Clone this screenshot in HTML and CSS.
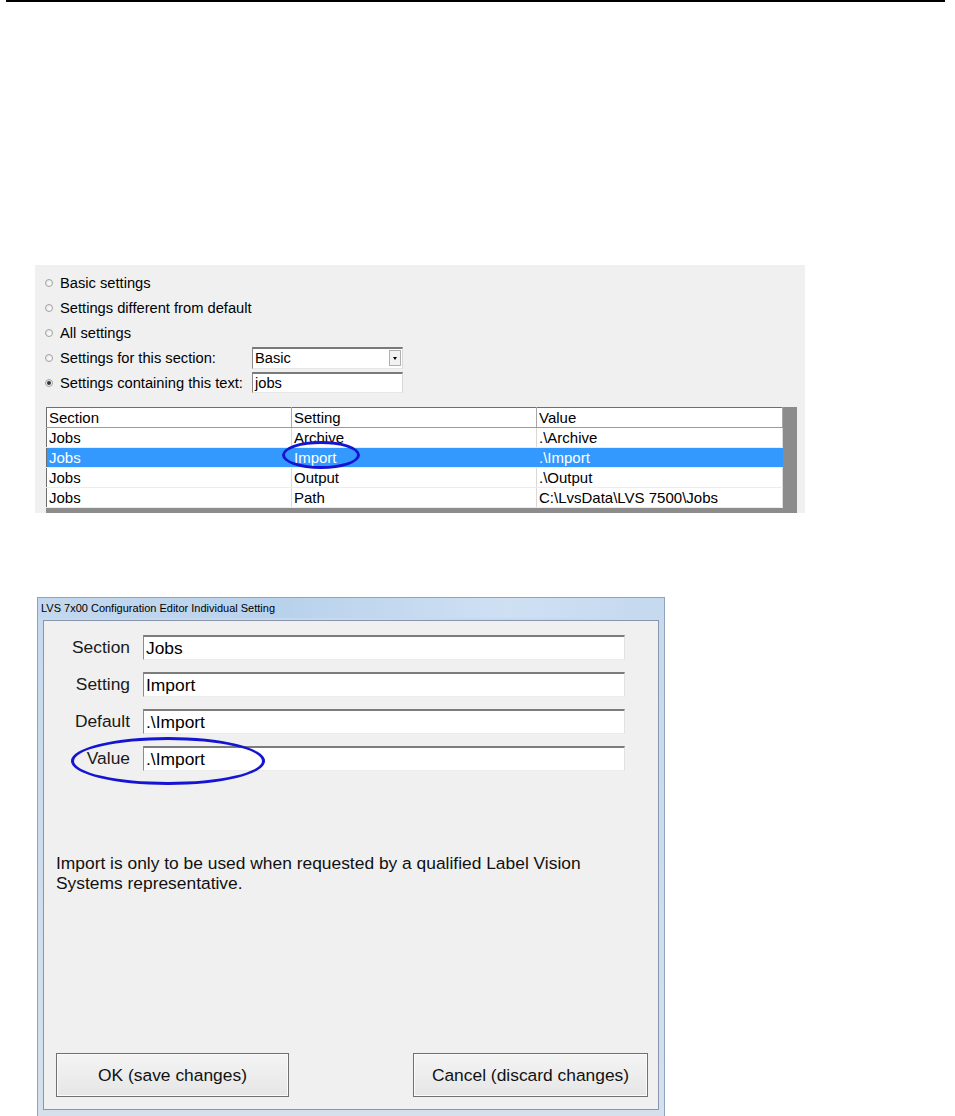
FILE: index.html
```html
<!DOCTYPE html>
<html lang="en">
<head>
    <meta charset="UTF-8">
    <title>LVS 7x00 Configuration Editor</title>
    <link rel="stylesheet" href="styles.css">
</head>
<body>
    <div class="rule"></div>

    <div class="panel">
        <div class="options">
            <div class="option"><span class="radio"></span><span class="option-label">Basic settings</span></div>
            <div class="option"><span class="radio"></span><span class="option-label">Settings different from default</span></div>
            <div class="option"><span class="radio"></span><span class="option-label">All settings</span></div>
            <div class="option">
                <span class="radio"></span><span class="option-label">Settings for this section:</span>
                <div class="combo"><span>Basic</span><span class="combo-btn"></span></div>
            </div>
            <div class="option">
                <span class="radio checked"></span><span class="option-label">Settings containing this text:</span>
                <div class="textbox">jobs</div>
            </div>
        </div>

        <div class="listview">
            <table class="grid">
                <colgroup>
                    <col class="col-section">
                    <col class="col-setting">
                    <col class="col-value">
                </colgroup>
                <thead>
                    <tr><th>Section</th><th>Setting</th><th>Value</th></tr>
                </thead>
                <tbody>
                    <tr><td>Jobs</td><td>Archive</td><td>.\Archive</td></tr>
                    <tr class="selected"><td>Jobs</td><td>Import</td><td>.\Import</td></tr>
                    <tr><td>Jobs</td><td>Output</td><td>.\Output</td></tr>
                    <tr><td>Jobs</td><td>Path</td><td>C:\LvsData\LVS 7500\Jobs</td></tr>
                </tbody>
            </table>
            <div class="callout callout-table"></div>
        </div>
    </div>

    <div class="dialog">
        <div class="titlebar">LVS 7x00 Configuration Editor Individual Setting</div>
        <div class="dialog-body">
            <div class="form">
                <div class="field"><label>Section</label><div class="input">Jobs</div></div>
                <div class="field"><label>Setting</label><div class="input">Import</div></div>
                <div class="field"><label>Default</label><div class="input">.\Import</div></div>
                <div class="field"><label>Value</label><div class="input">.\Import</div></div>
            </div>
            <p class="note">Import is only to be used when requested by a qualified Label Vision Systems representative.</p>
            <div class="buttons">
                <button class="btn btn-ok">OK (save changes)</button>
                <button class="btn btn-cancel">Cancel (discard changes)</button>
            </div>
            <div class="callout callout-value"></div>
        </div>
    </div>
</body>
</html>
```

FILE: styles.css
```css
* {
    margin: 0;
    padding: 0;
    box-sizing: border-box;
}

body {
    font-family: 'Liberation Sans', Arial, sans-serif;
    background: #fff;
    color: #000;
    width: 955px;
    height: 1116px;
    overflow: hidden;
}

.rule {
    height: 2px;
    margin: 0 10px 0 6px;
    background: #000;
}

/* settings filter panel */
.panel {
    margin: 263px 0 0 35px;
    width: 770px;
    height: 248px;
    background: #f0f0f0;
    padding-top: 5px;
}

.options {
    padding-left: 10px;
}

.option {
    height: 25px;
    display: flex;
    align-items: center;
    font-size: 14.7px;
    white-space: nowrap;
}

.radio {
    flex-shrink: 0;
    width: 8px;
    height: 8px;
    border-radius: 50%;
    border: 1px solid #a2a2a2;
    background: radial-gradient(circle at 65% 65%, #fdfdfd, #e2e2e2);
    margin-right: 7px;
    position: relative;
}

.radio.checked::after {
    content: "";
    position: absolute;
    left: 1px;
    top: 1px;
    width: 4px;
    height: 4px;
    border-radius: 50%;
    background: #333;
}

.option-label {
    flex-shrink: 0;
    min-width: 192px;
}

.combo, .textbox {
    flex-shrink: 0;
    width: 151px;
    background: #fff;
    border-top: 2px solid #7a7a7a;
    border-left: 1px solid #8a8a8a;
    border-right: 1px solid #d8d8d8;
    border-bottom: 1px solid #e6e6e6;
    font-size: 14.7px;
    padding-left: 2px;
    display: flex;
    align-items: center;
}

.combo {
    height: 22px;
    justify-content: space-between;
    padding-right: 1px;
}

.textbox {
    height: 21px;
}

.combo-btn {
    width: 12px;
    height: 16px;
    background: #f2f2f2;
    border: 1px solid #b0b0b0;
    position: relative;
}

.combo-btn::after {
    content: "";
    position: absolute;
    left: 3px;
    top: 6px;
    border-left: 2.5px solid transparent;
    border-right: 2.5px solid transparent;
    border-top: 3px solid #000;
}

.listview {
    position: relative;
    margin: 12px 0 0 11px;
    width: 751px;
    height: 106px;
    background: #8c8c8c;
}

.grid {
    width: 736px;
    table-layout: fixed;
    border-collapse: collapse;
    background: #fff;
    border: 1px solid #6f6f6f;
    font-size: 15px;
}

.col-section { width: 245px; }
.col-setting { width: 245px; }
.col-value { width: 246px; }

.grid th, .grid td {
    height: 20px;
    padding: 0 2px;
    text-align: left;
    font-weight: normal;
    white-space: nowrap;
    border-right: 1px solid #d9d9d9;
    border-bottom: 1px solid #ececec;
}

.grid th {
    border-right-color: #a8a8a8;
    border-bottom: 1px solid #9a9a9a;
}

.grid .selected td {
    background: #3399ff;
    color: #fff;
    border-right-color: #3399ff;
}

.callout {
    position: absolute;
    border: 3px solid #1414d2;
    border-radius: 50%;
    pointer-events: none;
}

.callout-table {
    left: 236px;
    top: 34px;
    width: 78px;
    height: 28px;
}

/* individual setting dialog */
.dialog {
    margin: 84px 0 0 37px;
    width: 628px;
    height: 519px;
    padding: 0 5px 6px;
    background: linear-gradient(to bottom, #c6d9ee, #d5e0ec);
    border: 1px solid #8fa3bc;
    border-bottom: none;
    display: flex;
    flex-direction: column;
}

.titlebar {
    height: 20px;
    margin: 0 -5px 2px;
    padding-left: 3px;
    display: flex;
    align-items: center;
    font-size: 11px;
    background: linear-gradient(to right, #c3d8ee, #b9d2ec 40%, #cfe0f3 75%, #c4d8ee);
}

.dialog-body {
    position: relative;
    flex: 1;
    background: #f0f0f0;
    border: 1px solid #8796ad;
    padding: 14px 10px 12px 12px;
    display: flex;
    flex-direction: column;
}

.form {
    display: flex;
    flex-direction: column;
    gap: 12px;
}

.field {
    display: flex;
    align-items: center;
    height: 25px;
}

.field label {
    width: 74px;
    text-align: right;
    font-size: 17.4px;
    color: #1a1a1a;
    margin-right: 13px;
}

.input {
    width: 482px;
    height: 25px;
    background: #fff;
    border-top: 2px solid #7c7c7c;
    border-left: 1px solid #8c8c8c;
    border-right: 1px solid #e2e2e2;
    border-bottom: 1px solid #ececec;
    font-size: 17.4px;
    padding-left: 2px;
    display: flex;
    align-items: center;
}

.note {
    margin-top: 82px;
    width: 570px;
    font-size: 17.4px;
    line-height: 20px;
    color: #111;
}

.buttons {
    margin-top: auto;
    display: flex;
    justify-content: space-between;
}

.btn {
    height: 44px;
    font-family: inherit;
    font-size: 17.4px;
    color: #111;
    background: linear-gradient(to bottom, #f4f4f4, #e6e6e6);
    border: 1px solid #707070;
    box-shadow: inset 0 0 0 1px #fbfbfb;
}

.btn-ok { width: 233px; }
.btn-cancel { width: 235px; }

.callout-value {
    left: 27px;
    top: 116px;
    width: 194px;
    height: 48px;
}
```
